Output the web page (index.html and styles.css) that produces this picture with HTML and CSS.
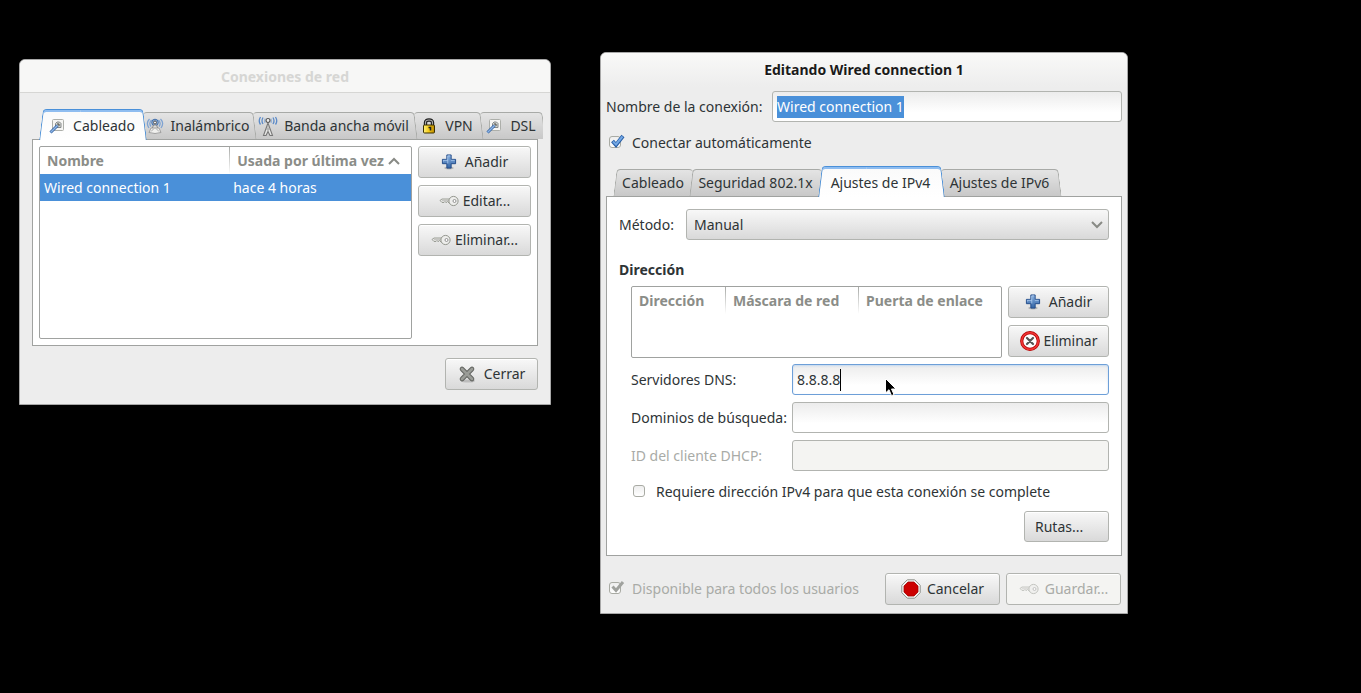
FILE: index.html
```html
<!DOCTYPE html>
<html lang="es">
<head>
  <meta charset="UTF-8">
  <meta name="viewport" content="width=device-width, initial-scale=1.0">
  <title>Conexiones de red</title>
  <link rel="stylesheet" href="styles.css">
</head>
<body>

  <!-- Iconos compartidos -->
  <svg class="sprites" aria-hidden="true">
    <defs>
      <linearGradient id="azul" x1="0" y1="0" x2="0" y2="1">
        <stop offset="0" stop-color="#86aee0"/>
        <stop offset="1" stop-color="#3465a4"/>
      </linearGradient>
      <linearGradient id="oro" x1="0" y1="0" x2="1" y2="0">
        <stop offset="0" stop-color="#fff27a"/>
        <stop offset="0.5" stop-color="#f5c914"/>
        <stop offset="1" stop-color="#b98700"/>
      </linearGradient>
      <symbol id="i-cable" viewBox="0 0 16 16">
        <rect x="3.500" y="1.500" width="11" height="11" rx="1" fill="#f6f6f4" stroke="#adafaa"/>
        <path d="M6.500 9.500V5.500L8 4h2.500L12 5.500v4z" fill="#d3d7cf" stroke="#85878a"/>
        <path d="M1.500 14.500L8.500 7.500" stroke="#3465a4" stroke-width="3"/>
        <path d="M1.500 14.500L8.500 7.500" stroke="#8fb5e6" stroke-width="1.400"/>
        <path d="M8 6h2v2" fill="none" stroke="#444"/>
      </symbol>
      <symbol id="i-wifi" viewBox="0 0 18 17">
        <path d="M3.500 1.500Q-.5 5.500 3 10.500M5.500 2.500Q2.500 5.500 5 9M14.500 1.500Q18.500 5.500 15 10.500M12.500 2.500Q15.500 5.500 13 9" fill="none" stroke="#7fa3d2" stroke-width="1.300"/>
        <circle cx="9" cy="5" r="3.300" fill="#88a9d4" stroke="#426fa9"/>
        <circle cx="9" cy="5" r="1.500" fill="#eee" stroke="#555"/>
        <path d="M7.500 7.500h3l1.500 4H6z" fill="#ddd" stroke="#777" stroke-width=".8"/>
        <path d="M5 10.500h8l2 4.500q-6 2-12 0z" fill="#f0f0ee" stroke="#999" stroke-width=".9"/>
        <path d="M5 14l3-3M13 14l-3-3" stroke="#aaa"/>
      </symbol>
      <symbol id="i-antena" viewBox="0 0 19 20">
        <path d="M2 1Q-.5 5 2 8.500M4.500 1.500Q2.500 5 4.500 8M17 1Q19.500 5 17 8.500M14.500 1.500Q16.500 5 14.500 8" fill="none" stroke="#5b8ac8" stroke-width="1.300"/>
        <path d="M6.500 2.500Q5.500 5 6.500 7M12.500 2.500Q13.500 5 12.500 7" fill="none" stroke="#8caed9"/>
        <path d="M9.500 7L5 19.500h2.500l2-4 2 4H14z" fill="#e8e8e6" stroke="#777" stroke-width="1.100"/>
        <path d="M9.500 9v6M7.500 13h4" stroke="#999" stroke-width=".8"/>
        <circle cx="9.500" cy="4.500" r="2" fill="#eee" stroke="#555" stroke-width="1.200"/>
      </symbol>
      <symbol id="i-candado" viewBox="0 0 13 16">
        <path d="M3 8V4.500Q3 2 6.500 2T10 4.500V8" fill="none" stroke="#222" stroke-width="3.400"/>
        <path d="M3 8V4.500Q3 2 6.500 2T10 4.500V8" fill="none" stroke="#aaa" stroke-width="1.100"/>
        <rect x="1" y="7" width="11" height="8" rx="1" fill="url(#oro)" stroke="#3b3000"/>
        <path d="M6 9.500h2v3" fill="none" stroke="#222" stroke-width="1.600"/>
      </symbol>
      <symbol id="i-mas" viewBox="0 0 16 17">
        <ellipse cx="8" cy="15" rx="5" ry="1.500" fill="#000" opacity=".2"/>
        <path d="M5.700 1h4.600v4.700h4.700v4.600h-4.700v4.700H5.700v-4.700H1V5.700h4.700z" fill="url(#azul)" stroke="#204a87" stroke-linejoin="round"/>
        <path d="M6.700 10V2h2.600M2 8V6.700H6.700M10 6.700h4" fill="none" stroke="#b6d0f2" stroke-width=".8"/>
      </symbol>
      <symbol id="i-llave" viewBox="0 0 20 12">
        <path d="M12 4H3L1 5.500l2 2h2l1-1 1 1.200 1.500-1.200L10 8h2z" fill="#e8e8e4" stroke="#92958d" stroke-width=".9"/>
        <path d="M3 5.700h9" stroke="#aaa" stroke-width=".7"/>
        <circle cx="14.500" cy="6" r="4.600" fill="#eeeeec" stroke="#92958d"/>
        <circle cx="15.500" cy="6" r="1.500" fill="#fff" stroke="#888" stroke-width=".9"/>
      </symbol>
      <symbol id="i-cerrar" viewBox="0 0 18 18">
        <ellipse cx="10" cy="16" rx="7" ry="1.600" fill="#000" opacity=".16"/>
        <path d="M4 4l10 10M14 4L4 14" stroke="#60625e" stroke-width="4.600" stroke-linecap="round"/>
        <path d="M4 4l10 10M14 4L4 14" stroke="#9a9c97" stroke-width="2.800" stroke-linecap="round"/>
      </symbol>
      <symbol id="i-borrar" viewBox="0 0 20 20">
        <circle cx="10" cy="10" r="8.300" fill="#fff" stroke="#b30000" stroke-width="3.200"/>
        <circle cx="10" cy="10" r="8.300" fill="none" stroke="#ee3434" stroke-width="1.700"/>
        <path d="M7 7l6 6M13 7l-6 6" stroke="#555" stroke-width="2.200" stroke-linecap="round"/>
      </symbol>
      <symbol id="i-alto" viewBox="0 0 20 20">
        <path d="M6.300.8h7.400l5.500 5.500v7.400l-5.500 5.500H6.300L.8 13.700V6.300z" fill="#f5f5f3" stroke="#8d908a"/>
        <path d="M7 3h6l4 4v6l-4 4H7l-4-4V7z" fill="#cc0000" stroke="#a40000" stroke-width=".8"/>
      </symbol>
      <symbol id="i-marca" viewBox="0 0 16 14">
        <path d="M3.500 7l3.500 4L14 2" fill="none" stroke="#2a5fa5" stroke-width="3.800"/>
        <path d="M4 7.500l3 3L13.500 2.500" fill="none" stroke="#73a8e6" stroke-width="2"/>
      </symbol>
      <symbol id="i-marca-gris" viewBox="0 0 16 14">
        <path d="M3.500 6.500l3.500 4L14 2" fill="none" stroke="#a0a29e" stroke-width="3"/>
      </symbol>
    </defs>
  </svg>

  <main class="desktop">

    <section class="window connections" aria-labelledby="t1">
      <h1 class="titlebar inactive" id="t1">Conexiones de red</h1>
      <div class="window-body">
        <div class="tabs" role="tablist">
          <button class="tab active" role="tab" aria-selected="true"><svg class="i16"><use href="#i-cable"/></svg>Cableado</button>
          <button class="tab after" role="tab"><svg class="i18"><use href="#i-wifi"/></svg>Inalámbrico</button>
          <button class="tab after" role="tab"><svg class="i20"><use href="#i-antena"/></svg>Banda ancha móvil</button>
          <button class="tab after" role="tab"><svg class="i16"><use href="#i-candado"/></svg>VPN</button>
          <button class="tab after" role="tab"><svg class="i16"><use href="#i-cable"/></svg>DSL</button>
        </div>
        <div class="panel list-panel">
          <div class="list">
            <table>
              <thead>
                <tr>
                  <th class="col-name">Nombre</th>
                  <th>Usada por última vez <svg class="sort" viewBox="0 0 12 8"><path d="M1 7l5-5 5 5"/></svg></th>
                </tr>
              </thead>
              <tbody>
                <tr class="selected">
                  <td>Wired connection 1</td>
                  <td>hace 4 horas</td>
                </tr>
              </tbody>
            </table>
          </div>
          <div class="buttons wide">
            <button class="btn"><svg class="i16"><use href="#i-mas"/></svg>Añadir</button>
            <button class="btn tight"><svg class="i20"><use href="#i-llave"/></svg>Editar...</button>
            <button class="btn tight"><svg class="i20"><use href="#i-llave"/></svg>Eliminar...</button>
          </div>
        </div>
        <div class="actions">
          <button class="btn close"><svg class="i18"><use href="#i-cerrar"/></svg>Cerrar</button>
        </div>
      </div>
    </section>

    <section class="window editor" aria-labelledby="t2">
      <h1 class="titlebar" id="t2">Editando Wired connection 1</h1>
      <div class="window-body">
        <div class="name-row">
          <label for="nombre">Nombre de la conexión:</label>
          <div class="entry"><input class="marked" id="nombre" type="text" size="15" value="Wired connection 1"></div>
        </div>
        <label class="check"><span class="box"><input type="checkbox" checked><svg><use href="#i-marca"/></svg></span>Conectar automáticamente</label>

        <div class="tabs" role="tablist">
          <button class="tab before" role="tab">Cableado</button>
          <button class="tab before" role="tab">Seguridad 802.1x</button>
          <button class="tab active" role="tab" aria-selected="true">Ajustes de IPv4</button>
          <button class="tab after" role="tab">Ajustes de IPv6</button>
        </div>

        <div class="panel form-panel">
          <div class="method">
            <label for="metodo">Método:</label>
            <div class="combo">
              <select id="metodo"><option>Manual</option></select>
              <svg viewBox="0 0 12 8"><path d="M1 1l5 5 5-5"/></svg>
            </div>
          </div>

          <h2>Dirección</h2>
          <div class="address">
            <div class="list">
              <table>
                <thead>
                  <tr>
                    <th class="col-dir">Dirección</th>
                    <th class="col-mask">Máscara de red</th>
                    <th>Puerta de enlace</th>
                  </tr>
                </thead>
              </table>
            </div>
            <div class="buttons">
              <button class="btn"><svg class="i16"><use href="#i-mas"/></svg>Añadir</button>
              <button class="btn tight"><svg class="i20"><use href="#i-borrar"/></svg>Eliminar</button>
            </div>
          </div>

          <div class="fields">
            <label for="dns">Servidores DNS:</label>
            <div class="entry focus">
              <input class="caret" id="dns" type="text" size="5" value="8.8.8.8">
              <svg class="pointer" viewBox="0 0 13 20"><path d="M1.500 1.500v14.500l3.500-3.300 2.500 6 2.500-1.100-2.500-5.600h4.500z"/></svg>
            </div>
            <label for="dominios">Dominios de búsqueda:</label>
            <div class="entry"><input class="fill" id="dominios" type="text"></div>
            <label class="dim" for="dhcp">ID del cliente DHCP:</label>
            <div class="entry disabled"><input class="fill" id="dhcp" type="text" disabled></div>
          </div>

          <label class="check require"><span class="box"><input type="checkbox"><svg><use href="#i-marca"/></svg></span>Requiere dirección IPv4 para que esta conexión se complete</label>
          <div class="routes"><button class="btn">Rutas...</button></div>
        </div>

        <div class="actions">
          <label class="check dim"><span class="box"><input type="checkbox" checked disabled><svg><use href="#i-marca-gris"/></svg></span>Disponible para todos los usuarios</label>
          <button class="btn"><svg class="i20"><use href="#i-alto"/></svg>Cancelar</button>
          <button class="btn" disabled><svg class="i20"><use href="#i-llave"/></svg>Guardar...</button>
        </div>
      </div>
    </section>

  </main>

</body>
</html>
```
FILE: styles.css
```css
* {
  margin: 0;
  padding: 0;
  box-sizing: border-box;
}

body {
  min-height: 100vh;
  background: #000;
  color: #2e3436;
  font-family: "Noto Sans", "Open Sans", sans-serif;
  font-size: 14px;
  line-height: 20px;
}

button, input, select {
  font: inherit;
  color: inherit;
}

.sprites {
  position: absolute;
  width: 0;
  height: 0;
}

.desktop {
  display: flex;
  align-items: flex-start;
  gap: 49px;
  padding: 52px 233px 52px 19px;
}

/* Ventanas */
.window {
  min-width: 0;
  background: #ededed;
  border: 1px solid #a8a8a8;
  border-radius: 6px 6px 0 0;
  overflow: hidden;
}

.connections {
  flex: 1 1 532px;
  margin-top: 7px;
}

.editor {
  flex: 1 1 528px;
}

.titlebar {
  font-size: 14px;
  font-weight: bold;
  line-height: 20px;
  height: 34px;
  padding: 7px;
  text-align: center;
  color: #1a1a1a;
  background: linear-gradient(#f9f9f8, #ededed);
  text-shadow: 0 1px #fff;
}

.titlebar.inactive {
  height: 33px;
  color: #d6d6d4;
  background: #f7f7f6;
  border-bottom: 1px solid #d6d6d4;
  text-shadow: none;
}

.connections .window-body {
  padding: 16px 12px 14px;
}

.editor .window-body {
  padding: 4px 5px 8px;
}

/* Pestañas */
.tabs {
  display: grid;
  align-items: end;
  height: 31px;
  position: relative;
  z-index: 1;
  margin-bottom: -1px;
}

.connections .tabs {
  grid-template-columns: 102fr 110fr 161fr 66fr 62fr;
  padding-left: 9px;
  padding-right: 1px;
  margin-right: -5px;
  overflow: hidden;
}

.editor .tabs {
  grid-template-columns: 76fr 129fr 121fr 117fr;
  padding-left: 9px;
  padding-right: 64px;
}

.tab {
  display: flex;
  align-items: center;
  justify-content: center;
  gap: 6px;
  min-width: 0;
  height: 28px;
  padding-bottom: 1px;
  position: relative;
  isolation: isolate;
  border: 0;
  background: none;
  white-space: nowrap;
}

.tab .i16 {
  margin-right: 2px;
}

.tab::before, .tab::after {
  content: "";
  position: absolute;
  z-index: -1;
  top: 0;
  bottom: 1px;
  background: linear-gradient(#e4e4e4, #c8c8c8);
  border: 0 solid #a8aaa7;
  border-top-width: 1px;
}

.tab::before {
  left: 0;
  right: 40%;
  border-left-width: 1px;
  border-radius: 4px 0 0 0;
  transform: skewX(-7deg);
}

.tab::after {
  left: 40%;
  right: -2px;
  border-right-width: 1px;
  border-radius: 0 4px 0 0;
  transform: skewX(7deg);
}

.tab.after::before {
  transform: none;
  border-left-width: 0;
}

.tab.before::after {
  transform: none;
  border-right-width: 0;
}

.tab.after:nth-child(2) { z-index: 4; }
.tab.after:nth-child(3) { z-index: 3; }
.tab.after:nth-child(4) { z-index: 2; }
.tab.before:nth-child(1) { z-index: 1; }
.tab.before:nth-child(2) { z-index: 2; }

.tab.active {
  height: 31px;
  z-index: 5;
  padding-bottom: 0;
  padding-top: 2px;
}

.tab.active::before, .tab.active::after {
  bottom: 0;
  background: linear-gradient(#fafafa, #fff);
  border-color: #4a90d9;
  box-shadow: inset 0 2px #8fbdf0;
}

/* Paneles y listas */
.panel {
  background: #fff;
  border: 1px solid #a0a2a0;
}

.list-panel {
  display: flex;
  gap: 6px;
  padding: 6px;
}

.list {
  flex: 1;
  min-width: 0;
  border: 1px solid #a0a2a0;
  border-radius: 2px;
  background: #fff;
}

.list-panel .list {
  height: 193px;
}

table {
  width: 100%;
  border-collapse: collapse;
  table-layout: fixed;
}

th, td {
  height: 27px;
  text-align: left;
  white-space: nowrap;
}

th {
  padding-left: 7px;
  color: #8b8d88;
}

th + th {
  padding-left: 8px;
  background: linear-gradient(#a8aaa7, #fff) left / 1px 100% no-repeat;
}

td {
  padding-left: 4px;
}

.selected {
  background: #4a90d9;
  color: #fff;
}

.col-name { width: 51%; }
.col-dir { width: 93px; }
.col-mask { width: 133px; }

.sort {
  width: 12px;
  height: 8px;
  vertical-align: 1px;
}

.sort path, .combo path {
  fill: none;
  stroke: #888a85;
  stroke-width: 2;
}

/* Botones */
.buttons {
  display: flex;
  flex-direction: column;
  gap: 7px;
  width: 101px;
}

.buttons.wide {
  width: 113px;
}

.btn {
  display: flex;
  align-items: center;
  justify-content: center;
  gap: 8px;
  height: 32px;
  padding: 0 10px;
  border: 1px solid #b2b4b0;
  border-radius: 3px;
  background: linear-gradient(#f8f8f8, #d9d9d9);
  box-shadow: inset 0 1px #fff;
  white-space: nowrap;
}

.btn.tight {
  gap: 4px;
}

.btn:disabled {
  color: #a9aba7;
  background: #f4f4f2;
}

.btn:disabled svg {
  opacity: 0.5;
}

svg {
  flex: none;
}

.i16 { width: 16px; height: 16px; }
.i18 { width: 18px; height: 18px; }
.i20 { width: 20px; height: 20px; }

.actions {
  display: flex;
  align-items: center;
  gap: 6px;
}

.connections .actions {
  justify-content: flex-end;
  padding-top: 12px;
}

.editor .actions {
  padding: 17px 1px 0 0;
}

.editor .actions .btn {
  width: 115px;
  gap: 6px;
}

.editor .actions .check {
  flex: 1;
}

.actions .close {
  width: 93px;
}

/* Campos */
.name-row {
  display: flex;
  align-items: center;
  gap: 9px;
}

.method {
  display: flex;
  align-items: center;
  gap: 12px;
}

.entry {
  flex: 1;
  display: flex;
  align-items: center;
  height: 31px;
  padding: 0 4px;
  position: relative;
  border: 1px solid #b2b4b0;
  border-radius: 3px;
  background: linear-gradient(#ececec, #fff 70%);
}

.entry input {
  border: 0;
  outline: 0;
  background: none;
  height: 22px;
  field-sizing: content;
}

.entry .fill {
  flex: 1;
  field-sizing: fixed;
  min-width: 0;
}

.entry .marked {
  background: #4a90d9;
  color: #fff;
}

.entry .caret {
  border-right: 1px solid #000;
}

.entry.focus {
  border-color: #6d9fd8;
  box-shadow: inset 0 1px 2px #c4d9f0;
}

.entry.disabled {
  background: #f4f4f2;
}

.pointer {
  position: absolute;
  left: 29%;
  top: 12px;
  width: 13px;
  height: 20px;
  fill: #000;
  stroke: #fff;
  z-index: 2;
}

.name-row .entry {
  flex: 0 0 350px;
}

.name-row label {
  flex: 1;
  min-width: 0;
  white-space: nowrap;
}

.check {
  display: flex;
  align-items: center;
  gap: 11px;
}

.name-row + .check {
  margin: 11px 0 13px 3px;
}

.editor .actions .check {
  padding-left: 3px;
}

.box {
  display: grid;
  grid-template: 12px / 12px;
  margin-bottom: 2px;
}

.box input {
  grid-area: 1 / 1;
  appearance: none;
  border: 1px solid #a9aba4;
  border-radius: 3px;
  background: linear-gradient(#eee, #fff);
}

/* La marca sobresale un poco de la casilla */
.box svg {
  grid-area: 1 / 1;
  width: 16px;
  height: 14px;
  margin-top: -2px;
  visibility: hidden;
  z-index: 1;
  pointer-events: none;
}

.box input:checked + svg {
  visibility: visible;
}

.dim {
  color: #a9aba7;
}

.form-panel {
  padding: 12px;
}

.combo {
  flex: 1;
  display: grid;
  align-items: center;
}

.combo select {
  grid-area: 1 / 1;
  appearance: none;
  height: 31px;
  padding: 0 7px;
  border: 1px solid #b2b4b0;
  border-radius: 3px;
  background: linear-gradient(#f8f8f8, #d9d9d9);
}

.combo svg {
  grid-area: 1 / 1;
  justify-self: end;
  width: 12px;
  height: 8px;
  margin-right: 6px;
  pointer-events: none;
}

h2 {
  font-size: 14px;
  line-height: 20px;
  margin: 20px 0 6px;
}

.address {
  display: flex;
  gap: 6px;
  margin-left: 12px;
}

.address .list {
  height: 72px;
}

.fields {
  display: grid;
  grid-template-columns: 149px 1fr;
  gap: 7px 12px;
  align-items: center;
  margin: 6px 0 11px 12px;
  white-space: nowrap;
}

.require {
  margin-left: 14px;
}

.routes {
  display: flex;
  justify-content: flex-end;
  margin: 9px 0 1px;
}

.routes .btn {
  width: 85px;
  height: 31px;
  justify-content: flex-start;
}
```
